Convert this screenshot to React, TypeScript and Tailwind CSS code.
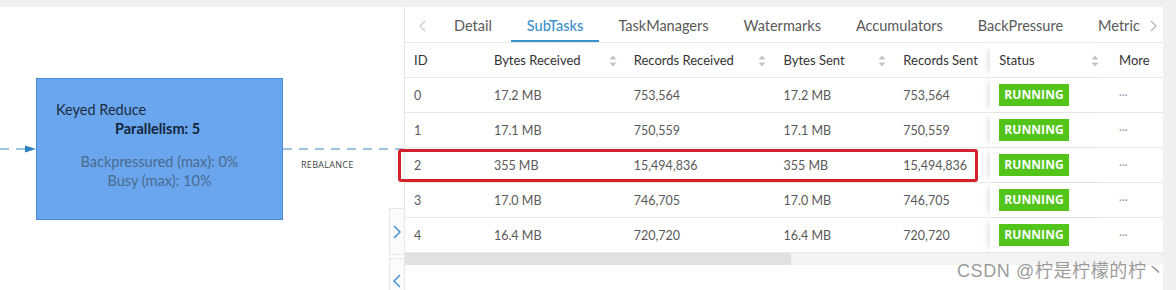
import React from "react";

const rows = [
  { id: "0", br: "17.2 MB", rr: "753,564", bs: "17.2 MB", rs: "753,564" },
  { id: "1", br: "17.1 MB", rr: "750,559", bs: "17.1 MB", rs: "750,559" },
  { id: "2", br: "355 MB", rr: "15,494,836", bs: "355 MB", rs: "15,494,836" },
  { id: "3", br: "17.0 MB", rr: "746,705", bs: "17.0 MB", rs: "746,705" },
  { id: "4", br: "16.4 MB", rr: "720,720", bs: "16.4 MB", rs: "720,720" },
];

function Sort() {
  return (
    <svg width="8" height="12" viewBox="0 0 8 12" className="shrink-0">
      <path d="M4 0.5 L7.5 4.5 L0.5 4.5 Z" fill="#c4c4c4" />
      <path d="M4 11.5 L7.5 7.5 L0.5 7.5 Z" fill="#c4c4c4" />
    </svg>
  );
}

const tabs = ["Detail", "SubTasks", "TaskManagers", "Watermarks", "Accumulators", "BackPressure", "Metric"];

export default function App() {
  return (
    <div
      className="w-[1176px] h-[290px] bg-white relative overflow-hidden text-[#595959]"
      style={{ fontFamily: 'Lato, "Noto Sans CJK SC", sans-serif' }}
    >
      <div className="h-[7px] bg-[#f0f0f0]" />
      <div className="flex h-[283px]">
        {/* canvas */}
        <div className="w-[404px] relative shrink-0">
          <svg width="404" height="283" className="absolute left-0 top-0">
            <line x1="0" y1="142" x2="26" y2="142" stroke="#3d8ac6" strokeWidth="1.2" strokeDasharray="9 7" />
            <path d="M25 138.5 L36 142 L25 145.5 Z" fill="#2f7fc4" />
            <line x1="283" y1="142" x2="404" y2="142" stroke="#3d8ac6" strokeWidth="1.2" strokeDasharray="9 7" />
          </svg>
          <div className="absolute left-[36px] top-[71px] w-[247px] h-[142px] bg-[#6aa6ee] border border-[#4a8bd8] flex flex-col">
            <div className="pl-[19px] pt-[21px] text-[14.5px] leading-[19px] text-[#1c2b40]">Keyed Reduce</div>
            <div className="pl-[78px] text-[14.5px] leading-[19px] font-bold text-[#14253a]">Parallelism: 5</div>
            <div className="mt-[14px] text-center text-[14.5px] leading-[19px] text-[#4c6a8c]">Backpressured (max): 0%</div>
            <div className="text-center text-[14.5px] leading-[19px] text-[#4c6a8c]">Busy (max): 10%</div>
          </div>
          <div className="absolute left-[301px] top-[152px] text-[9px] leading-[12px] tracking-[0.3px] text-[#444]" style={{ fontFamily: '"Open Sans", sans-serif' }}>REBALANCE</div>
          <div className="absolute left-[389px] top-[201px] w-[16px] h-[47px] border border-[#e6e6e6] bg-[#fbfbfb] flex items-center justify-center">
            <svg width="8" height="14" viewBox="0 0 8 14"><path d="M1 1 L7 7 L1 13" fill="none" stroke="#3a88d0" strokeWidth="1.4" /></svg>
          </div>
          <div className="absolute left-[389px] top-[251px] w-[16px] h-[40px] border border-[#e6e6e6] bg-[#fbfbfb] flex items-center justify-center pt-[6px]">
            <svg width="8" height="14" viewBox="0 0 8 14"><path d="M7 1 L1 7 L7 13" fill="none" stroke="#3a88d0" strokeWidth="1.4" /></svg>
          </div>
        </div>

        {/* right panel */}
        <div className="w-[759px] shrink-0 border-l border-[#e8e8e8] flex flex-col">
          <div className="h-[36px] border-b border-[#e8e8e8] flex items-stretch relative">
            <div className="w-[33px] flex items-center justify-center pl-[2px] pt-[3px]">
              <svg width="7" height="12" viewBox="0 0 7 12"><path d="M6 1 L1 6 L6 11" fill="none" stroke="#c8c8c8" strokeWidth="1.1" /></svg>
            </div>
            <div className="flex gap-[3px] text-[14.5px]">
              {tabs.map((t) => (
                <div
                  key={t}
                  className={
                    "px-[16px] flex items-center pt-[4px] " +
                    (t === "SubTasks" ? "text-[#3b8fcd] border-b-2 border-[#3b8fcd] font-medium" : "border-b-2 border-transparent")
                  }
                >
                  {t}
                </div>
              ))}
            </div>
            <div className="absolute right-[6px] top-0 h-full flex items-center bg-white pl-[6px] pt-[3px]">
              <svg width="7" height="12" viewBox="0 0 7 12"><path d="M1 1 L6 6 L1 11" fill="none" stroke="#b0b0b0" strokeWidth="1.1" /></svg>
            </div>
          </div>

          <div className="text-[12.5px]">
            <div className="flex h-[35px] border-b border-[#e8e8e8] text-[#333] pt-[2px] text-[13px]">
              <div className="w-[80px] pl-[9px] flex items-center">ID</div>
              <div className="w-[140px] pl-[9px] pr-[8px] flex items-center justify-between">Bytes Received<Sort /></div>
              <div className="w-[150px] pl-[9px] pr-[9px] flex items-center justify-between">Records Received<Sort /></div>
              <div className="w-[120px] pl-[9px] pr-[8px] flex items-center justify-between">Bytes Sent<Sort /></div>
              <div className="w-[96px] pl-[9px] flex items-center">Records Sent</div>
              <div className="w-[120px] pl-[9px] pr-[11px] flex items-center justify-between shadow-[-6px_0_6px_-4px_rgba(0,0,0,0.12)]">Status<Sort /></div>
              <div className="w-[53px] pl-[9px] flex items-center">More</div>
            </div>
            {rows.map((r) => (
              <div key={r.id} className="flex h-[35px] border-b border-[#e8e8e8]">
                <div className="w-[80px] pl-[9px] flex items-center pt-[2px]">{r.id}</div>
                <div className="w-[140px] pl-[9px] flex items-center pt-[2px]">{r.br}</div>
                <div className="w-[150px] pl-[9px] flex items-center pt-[2px]">{r.rr}</div>
                <div className="w-[120px] pl-[9px] flex items-center pt-[2px]">{r.bs}</div>
                <div className="w-[96px] pl-[9px] flex items-center pt-[2px]">{r.rs}</div>
                <div className="w-[120px] pl-[9px] flex items-center shadow-[-6px_0_6px_-4px_rgba(0,0,0,0.12)]">
                  <span className="bg-[#52c41a] text-white font-bold text-[12px] leading-[22px] px-[5px] tracking-[0.1px]" style={{ fontFamily: '"Open Sans", sans-serif' }}>RUNNING</span>
                </div>
                <div className="w-[53px] pl-[9px] flex items-center text-[#999] text-[11px]">···</div>
              </div>
            ))}
          </div>
          <div className="h-[12px] bg-[#f3f3f3] flex">
            <div className="w-[386px] bg-[#e1e1e1]" />
          </div>
        </div>
        <div className="flex-1 bg-[#f0f0f0]" />
      </div>

      {/* highlight box */}
      <div className="absolute left-[398px] top-[149px] w-[580px] h-[33px] border-[3px] border-[#d3222c] rounded-[3px]" />
      {/* watermark */}
      <div
        className="absolute left-[957px] top-[259px] text-[18px] leading-[24px] tracking-[0.6px] text-[#9c9c9c]"
        style={{ fontFamily: '"Liberation Sans", "Noto Sans CJK SC", sans-serif' }}
      >
        CSDN @柠是柠檬的柠丶
      </div>
    </div>
  );
}
